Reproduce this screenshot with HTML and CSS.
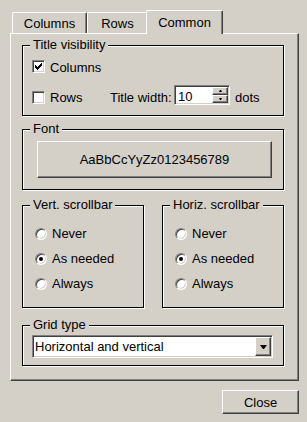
FILE: index.html
```html
<!DOCTYPE html>
<html lang="en">
<head>
    <meta charset="UTF-8">
    <title>Table options</title>
    <link rel="stylesheet" href="styles.css">
</head>
<body>

    <div class="dialog">
        <!-- tab strip -->
        <div class="tabs">
            <div class="tab tab-columns">Columns</div>
            <div class="tab tab-rows">Rows</div>
            <div class="tab tab-common active">Common</div>
        </div>

        <div class="panel">
            <!-- Title visibility -->
            <div class="group group-title">
                <div class="legend">Title visibility</div>
                <div class="check-row first">
                    <span class="box"><svg class="tick" width="7" height="7" viewBox="0 0 7 7" shape-rendering="crispEdges"><path d="M6 0h1v1h-1z M5 1h2v1h-2z M0 2h1v1h-1z M4 2h3v1h-3z M0 3h2v1h-2z M3 3h3v1h-3z M0 4h5v1h-5z M1 5h3v1h-3z M2 6h1v1h-1z"/></svg></span>
                    <span class="label">Columns</span>
                </div>
                <div class="check-row second">
                    <div class="check-rows">
                        <span class="box"></span>
                        <span class="label">Rows</span>
                    </div>
                    <span class="label title-width">Title width:</span>
                    <div class="spin">
                        <span class="spin-value">10</span>
                        <div class="spin-buttons">
                            <span class="btn spin-btn"><i class="arrow-up"></i></span>
                            <span class="btn spin-btn"><i class="arrow-down"></i></span>
                        </div>
                    </div>
                    <span class="label dots">dots</span>
                </div>
            </div>

            <!-- Font -->
            <div class="group group-font">
                <div class="legend">Font</div>
                <div class="btn font-btn">AaBbCcYyZz0123456789</div>
            </div>

            <!-- scrollbars -->
            <div class="scroll-row">
                <div class="group group-scroll">
                    <div class="legend">Vert. scrollbar</div>
                    <div class="options">
                        <div class="opt"><span class="dot"></span>Never</div>
                        <div class="opt"><span class="dot on"></span>As needed</div>
                        <div class="opt"><span class="dot"></span>Always</div>
                    </div>
                </div>
                <div class="group group-scroll">
                    <div class="legend">Horiz. scrollbar</div>
                    <div class="options">
                        <div class="opt"><span class="dot"></span>Never</div>
                        <div class="opt"><span class="dot on"></span>As needed</div>
                        <div class="opt"><span class="dot"></span>Always</div>
                    </div>
                </div>
            </div>

            <!-- Grid type -->
            <div class="group group-grid">
                <div class="legend">Grid type</div>
                <div class="select">
                    <span class="select-value">Horizontal and vertical</span>
                    <span class="btn select-btn"><i class="arrow-drop"></i></span>
                </div>
            </div>
        </div>

        <div class="footer">
            <div class="btn close">Close</div>
        </div>
    </div>

</body>
</html>
```

FILE: styles.css
```css
/* --- base --- */
body {
    margin: 0;
    background-color: #d4d0c8;
    color: #000;
    font-family: "Liberation Sans", Arial, sans-serif;
    font-size: 13px;
    line-height: 15px;
}

.dialog {
    width: 289px;
    padding: 10px 8px 0 10px;
}

/* --- tabs --- */
.tabs {
    display: flex;
    align-items: flex-end;
    height: 23px;
    padding-left: 2px;
}

.tab {
    box-sizing: border-box;
    height: 21px;
    padding-top: 3px;
    text-align: center;
    border-top: 1px solid #fff;
    border-left: 1px solid #fff;
    border-right: 1px solid #404040;
    border-radius: 2px 2px 0 0;
    box-shadow: inset -1px 0 #808080;
}

.tab-columns { width: 75px; }
.tab-rows { width: 61px; }
.tab-common { width: 73px; }

.tab.active {
    width: 77px;
    height: 24px;
    padding-top: 4px;
    margin: 0 -2px -1px;
    background-color: #d4d0c8;
    position: relative;
    z-index: 1;
}

/* --- panel --- */
.panel {
    box-sizing: border-box;
    width: 289px;
    padding: 11px 14px 14px 11px;
    border: 1px solid;
    border-color: #fff #404040 #404040 #fff;
    box-shadow: inset -1px -1px #808080;
}

/* etched group box */
.group {
    border: 1px solid #000;
    box-shadow: inset 1px 1px #fff, 1px 1px #fff;
}

.legend {
    width: fit-content;
    margin: -9px 0 0 7px;
    padding: 0 3px;
    background-color: #d4d0c8;
}

/* --- raised / sunken pieces --- */
.btn {
    box-sizing: border-box;
    background-color: #d4d0c8;
    border: 1px solid;
    border-color: #fff #404040 #404040 #fff;
    box-shadow: inset -1px -1px #808080;
    display: flex;
    align-items: center;
    justify-content: center;
}

.box, .spin, .select, .dot {
    box-sizing: border-box;
    background-color: #fff;
    border: 1px solid;
    border-color: #808080 #fff #fff #808080;
    box-shadow: inset 1px 1px #404040, inset -1px -1px #d4d0c8;
}

/* --- title visibility --- */
.group-title {
    padding-bottom: 10px;
}

.check-row {
    display: flex;
    align-items: flex-start;
    margin-left: 9px;
}

.check-row.first {
    gap: 5px;
    margin-top: 8px;
}

.check-row.second {
    height: 20px;
    margin-top: 10px;
}

.box {
    width: 13px;
    height: 13px;
    display: flex;
    align-items: center;
    justify-content: center;
    flex-shrink: 0;
}

.check-rows {
    display: flex;
    gap: 5px;
    width: 78px;
}

.check-row.second .box { margin-top: 6px; }
.check-row.second .label { margin-top: 5px; }

.title-width { width: 64px; }
.dots { margin-left: 5px; }

.spin {
    display: flex;
    width: 56px;
    height: 20px;
}

.spin-value {
    flex: 1;
    padding: 3px 0 0 3px;
}

.spin-buttons {
    display: flex;
    flex-direction: column;
    width: 16px;
    margin: 1px 1px 1px 0;
}

.spin-btn { flex: 1; }

.arrow-up, .arrow-down {
    width: 1px;
    border-left: 1px solid transparent;
    border-right: 1px solid transparent;
}
.arrow-up { border-bottom: 2px solid #000; }
.arrow-down { border-top: 2px solid #000; }

/* --- font --- */
.group-font {
    margin-top: 13px;
    padding-bottom: 11px;
}

.font-btn {
    height: 37px;
    margin: 5px 11px 0 14px;
}

/* --- scrollbars --- */
.scroll-row {
    display: flex;
    gap: 18px;
    margin-top: 15px;
}

.group-scroll {
    flex: 1;
    padding-bottom: 16px;
}

.options {
    padding: 14px 0 0 12px;
}

.opt {
    display: flex;
    gap: 5px;
}

.opt + .opt { margin-top: 10px; }

.dot {
    width: 12px;
    height: 12px;
    margin-top: 2px;
    border-radius: 50%;
    display: flex;
    align-items: center;
    justify-content: center;
}

.dot.on::after {
    content: "";
    width: 4px;
    height: 4px;
    border-radius: 50%;
    background-color: #000;
}

/* --- grid type --- */
.group-grid {
    margin-top: 17px;
    padding-bottom: 7px;
}

.select {
    display: flex;
    height: 23px;
    margin: 3px 10px 0 9px;
}

.select-value {
    flex: 1;
    padding: 3px 0 0 2px;
}

.select-btn {
    width: 16px;
    margin: 1px;
}

.arrow-drop {
    width: 1px;
    border-left: 3px solid transparent;
    border-right: 3px solid transparent;
    border-top: 4px solid #000;
}

/* --- footer --- */
.footer {
    display: flex;
    justify-content: flex-end;
    margin-top: 9px;
}

.close {
    width: 77px;
    height: 24px;
}
```
